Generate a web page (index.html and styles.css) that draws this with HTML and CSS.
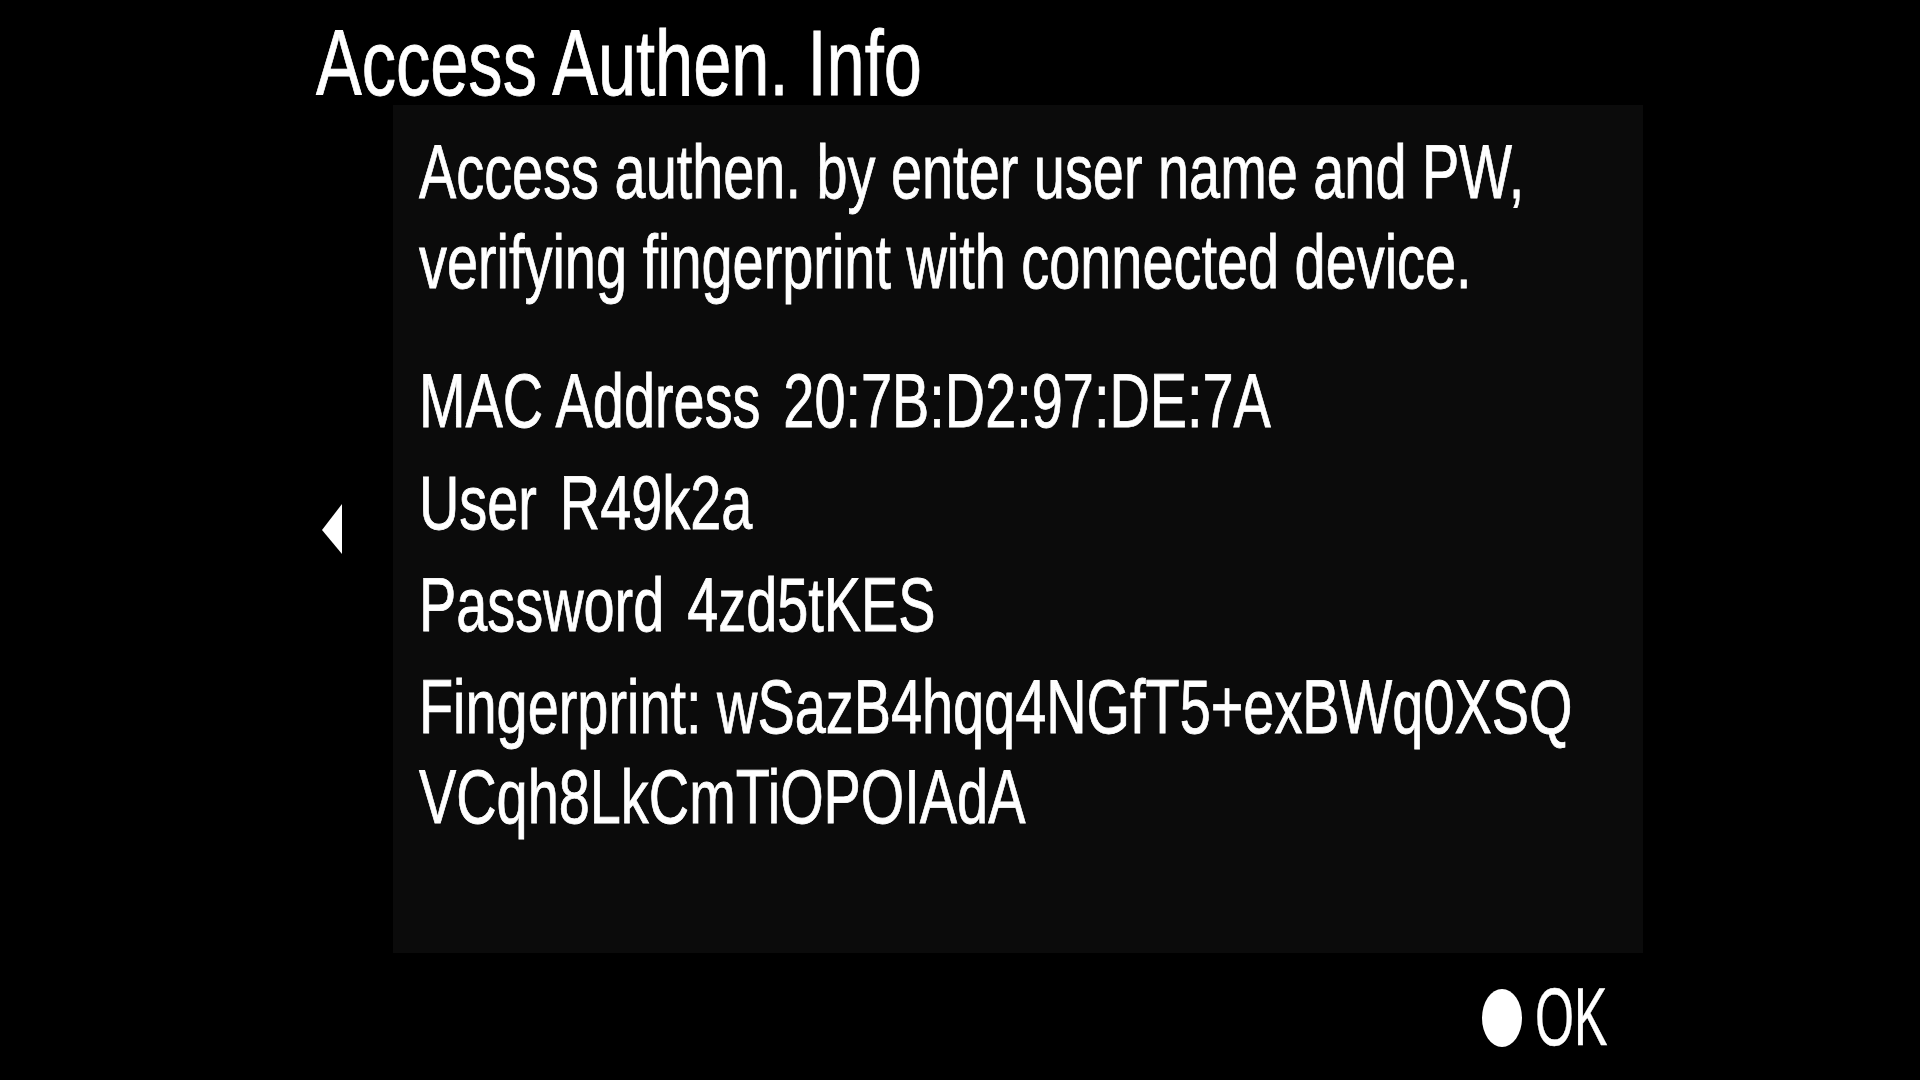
FILE: index.html
```html
<!DOCTYPE html>
<html lang="en">
<head>
<meta charset="utf-8">
<title>Access Authen. Info</title>
<link rel="stylesheet" href="styles.css">
</head>
<body>
<div class="screen">
  <header class="title-bar">
    <h1 class="title">Access Authen. Info</h1>
  </header>
  <main class="main">
    <div class="nav-arrow">
      <svg width="20" height="50" viewBox="0 0 20 50"><path d="M20 0 L20 50 L0 26 Z" fill="#fff"/></svg>
    </div>
    <section class="panel">
      <div class="panel-text">
        <p class="intro">Access authen. by enter user name and PW,<br>verifying fingerprint with connected device.</p>
        <div class="rows">
          <div class="row"><span class="label">MAC Address</span> 20:7B:D2:97:DE:7A</div>
          <div class="row"><span class="label">User</span> R49k2a</div>
          <div class="row"><span class="label">Password</span> 4zd5tKES</div>
          <div class="row">Fingerprint: wSazB4hqq4NGfT5+exBWq0XSQ<br>VCqh8LkCmTiOPOIAdA</div>
        </div>
      </div>
    </section>
  </main>
  <footer class="footer">
    <span class="ok-dot"></span>
    <span class="ok-label"><span class="ok-text">OK</span></span>
  </footer>
</div>
</body>
</html>
```
FILE: styles.css
```css
html, body {
  margin: 0;
  padding: 0;
  background: #000;
}

.screen {
  width: 1920px;
  height: 1080px;
  display: flex;
  flex-direction: column;
  background: #000;
  color: #fff;
  font-family: "Liberation Sans", Arial, sans-serif;
  overflow: hidden;
}

.title-bar {
  height: 105px;
  box-sizing: border-box;
  padding: 21px 0 0 316px;
}

.title {
  margin: 0;
  font-size: 92px;
  font-weight: normal;
  line-height: 84px;
  white-space: nowrap;
  display: inline-block;
  -webkit-text-stroke: 0.8px #fff;
  transform: scaleX(0.745);
  transform-origin: left top;
}

.main {
  display: flex;
  align-items: center;
  padding-left: 322px;
}

.nav-arrow {
  width: 20px;
  height: 50px;
  margin-right: 51px;
  display: flex;
}

.panel {
  width: 1250px;
  height: 848px;
  box-sizing: border-box;
  padding: 22px 0 0 26px;
  background: #0b0b0b;
}

.panel-text {
  font-size: 76px;
  line-height: 90px;
  white-space: nowrap;
  -webkit-text-stroke: 0.8px #fff;
  transform: scaleX(0.735);
  transform-origin: left top;
}

.intro {
  margin: 0 0 49px 0;
}

.rows {
  display: flex;
  flex-direction: column;
  gap: 12px;
}

.label {
  margin-right: 10px;
}

.footer {
  flex: 1;
  display: flex;
  align-items: center;
  justify-content: flex-end;
  padding-right: 311px;
  padding-top: 2px;
}

.ok-dot {
  width: 40px;
  height: 58px;
  border-radius: 50%;
  background: #fff;
  margin-right: 13px;
}

.ok-label {
  width: 74px;
  height: 81px;
  display: block;
}

.ok-text {
  display: inline-block;
  font-size: 81px;
  line-height: 81px;
  white-space: nowrap;
  -webkit-text-stroke: 0.4px #fff;
  transform: scaleX(0.62);
  transform-origin: left top;
}
```
